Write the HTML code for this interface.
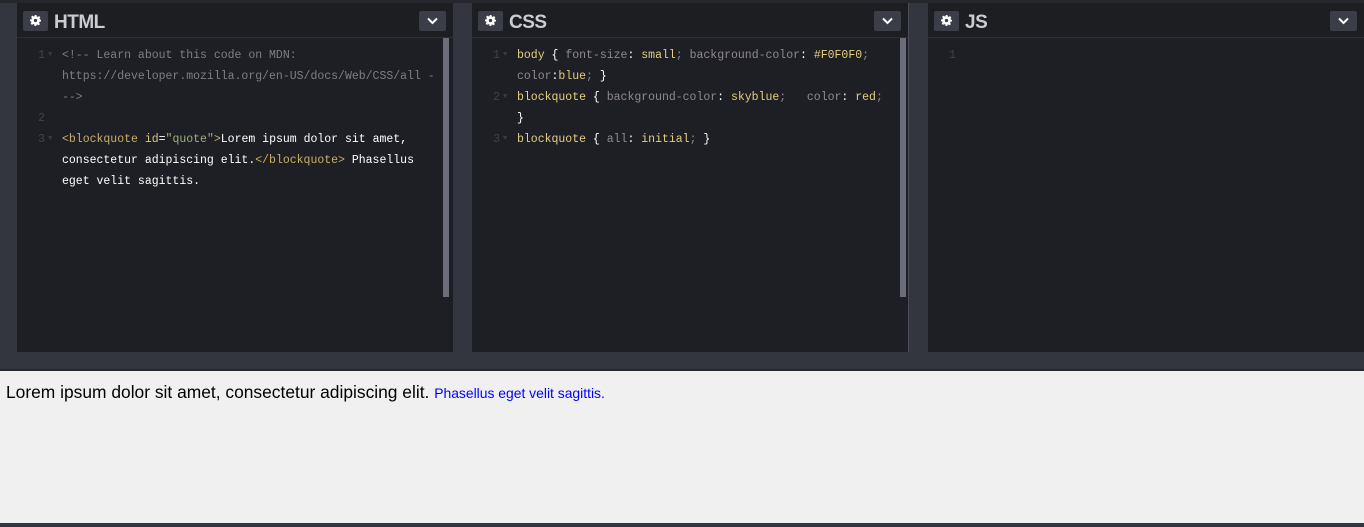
<!DOCTYPE html>
<html><head><meta charset="utf-8"><style>
*{margin:0;padding:0;box-sizing:border-box}
body{width:1364px;height:527px;background:#33363e;position:relative;overflow:hidden;font-family:"Liberation Sans",sans-serif}
.top{position:absolute;left:0;top:0;width:1364px;height:3px;background:#25272d}
.panel{position:absolute;top:3px;height:349px;background:#1e1f24}
.hd{position:absolute;left:0;top:0;right:0;height:35px;border-bottom:1px solid #2c2e35;background:#1d1e22}
.gear{position:absolute;left:6px;top:8px;width:25px;height:20px;background:#3b3e47;border-radius:2px}
.gear svg{position:absolute;left:7px;top:4px}
.title{position:absolute;left:37px;top:9px;font-size:19px;font-weight:bold;color:#c9ccd3;letter-spacing:-0.5px}
.chev{position:absolute;right:7px;top:8px;width:27px;height:20px;background:#3b3e47;border-radius:2px}
.chev svg{position:absolute;left:8px;top:6px}
.code{position:absolute;left:0;top:42px;font-family:"Liberation Mono",monospace;font-size:11.5px;line-height:21px;color:#fff}
.ln{position:absolute;left:0;width:28px;text-align:right;color:#3f424a}
.ln i{font-style:normal;color:#3a3d44;font-size:7px;position:absolute;left:31px;top:0}
.tx{position:absolute;left:45px;white-space:pre}
.c{color:#7d7f86}.t{color:#c8b068}.a{color:#d7c887}.s{color:#9cb07a}.k{color:#e3cf7f}.p{color:#8f8795}.w{color:#fff}
.sb{position:absolute;top:35px;width:6px;height:259px;background:#6b6e78}
.prev{position:absolute;left:0;top:369px;width:1364px;height:154px;background:#f0f0f0;border-top:2px solid #26282e}
.bot{position:absolute;left:0;top:523px;width:1364px;height:4px;background:#33363e}
</style></head><body>
<div class="top"></div>

<div class="panel" style="left:17px;width:436px">
 <div class="hd"><div class="gear"><svg width="11" height="11" viewBox="0 0 12 12"><path fill="#fff" d="M5 0h2l.3 1.6 1.2.5 1.4-.9 1.4 1.4-.9 1.4.5 1.2L12 5v2l-1.6.3-.5 1.2.9 1.4-1.4 1.4-1.4-.9-1.2.5L7 12H5l-.3-1.6-1.2-.5-1.4.9-1.4-1.4.9-1.4-.5-1.2L0 7V5l1.6-.3.5-1.2-.9-1.4 1.4-1.4 1.4.9 1.2-.5z"/><circle cx="6" cy="6" r="1.8" fill="#3b3e47"/></svg></div><div class="title">HTML</div><div class="chev"><svg width="11" height="8" viewBox="0 0 11 8"><path d="M1 1.5l4.5 4.5 4.5-4.5" stroke="#fff" stroke-width="2" fill="none"/></svg></div></div>
 <div class="code">
  <div class="ln" style="top:0">1<i>▼</i></div>
  <div class="tx c" style="top:0">&lt;!-- Learn about this code on MDN:
https://developer.mozilla.org/en-US/docs/Web/CSS/all -
--&gt;</div>
  <div class="ln" style="top:63px">2</div>
  <div class="ln" style="top:84px">3<i>▼</i></div>
  <div class="tx" style="top:84px"><span class="t">&lt;blockquote</span> <span class="a">id</span>=<span class="s">"quote"</span><span class="t">&gt;</span>Lorem ipsum dolor sit amet,
consectetur adipiscing elit.<span class="t">&lt;/blockquote&gt;</span> Phasellus
eget velit sagittis.</div>
 </div>
 <div class="sb" style="left:426px"></div>
</div>

<div class="panel" style="left:472px;width:437px;border-right:1px solid #4a4d55">
 <div class="hd"><div class="gear"><svg width="11" height="11" viewBox="0 0 12 12"><path fill="#fff" d="M5 0h2l.3 1.6 1.2.5 1.4-.9 1.4 1.4-.9 1.4.5 1.2L12 5v2l-1.6.3-.5 1.2.9 1.4-1.4 1.4-1.4-.9-1.2.5L7 12H5l-.3-1.6-1.2-.5-1.4.9-1.4-1.4.9-1.4-.5-1.2L0 7V5l1.6-.3.5-1.2-.9-1.4 1.4-1.4 1.4.9 1.2-.5z"/><circle cx="6" cy="6" r="1.8" fill="#3b3e47"/></svg></div><div class="title">CSS</div><div class="chev"><svg width="11" height="8" viewBox="0 0 11 8"><path d="M1 1.5l4.5 4.5 4.5-4.5" stroke="#fff" stroke-width="2" fill="none"/></svg></div></div>
 <div class="code">
  <div class="ln" style="top:0">1<i>▼</i></div>
  <div class="tx" style="top:0"><span class="k">body</span> <span class="w">{</span> <span class="p">font-size</span><span class="w">:</span> <span class="k">small</span><span class="p">;</span> <span class="p">background-color</span><span class="w">:</span> <span class="k">#F0F0F0</span><span class="p">;</span>
<span class="p">color</span><span class="w">:</span><span class="k">blue</span><span class="p">;</span> <span class="w">}</span></div>
  <div class="ln" style="top:42px">2<i>▼</i></div>
  <div class="tx" style="top:42px"><span class="k">blockquote</span> <span class="w">{</span> <span class="p">background-color</span><span class="w">:</span> <span class="k">skyblue</span><span class="p">;</span>   <span class="p">color</span><span class="w">:</span> <span class="k">red</span><span class="p">;</span>
<span class="w">}</span></div>
  <div class="ln" style="top:84px">3<i>▼</i></div>
  <div class="tx" style="top:84px"><span class="k">blockquote</span> <span class="w">{</span> <span class="p">all</span><span class="w">:</span> <span class="k">initial</span><span class="p">;</span> <span class="w">}</span></div>
 </div>
 <div class="sb" style="left:428px"></div>
</div>

<div class="panel" style="left:928px;width:436px">
 <div class="hd"><div class="gear"><svg width="11" height="11" viewBox="0 0 12 12"><path fill="#fff" d="M5 0h2l.3 1.6 1.2.5 1.4-.9 1.4 1.4-.9 1.4.5 1.2L12 5v2l-1.6.3-.5 1.2.9 1.4-1.4 1.4-1.4-.9-1.2.5L7 12H5l-.3-1.6-1.2-.5-1.4.9-1.4-1.4.9-1.4-.5-1.2L0 7V5l1.6-.3.5-1.2-.9-1.4 1.4-1.4 1.4.9 1.2-.5z"/><circle cx="6" cy="6" r="1.8" fill="#3b3e47"/></svg></div><div class="title">JS</div><div class="chev"><svg width="11" height="8" viewBox="0 0 11 8"><path d="M1 1.5l4.5 4.5 4.5-4.5" stroke="#fff" stroke-width="2" fill="none"/></svg></div></div>
 <div class="code"><div class="ln" style="top:0">1</div></div>
</div>

<div class="prev">
 <div style="position:absolute;left:6px;top:11px;font-size:17.4px;color:#000;white-space:nowrap">Lorem ipsum dolor sit amet, consectetur adipiscing elit. <span style="font-size:13.9px;color:#0000ff">Phasellus eget velit sagittis.</span></div>
</div>
<div class="bot"></div>
</body></html>
